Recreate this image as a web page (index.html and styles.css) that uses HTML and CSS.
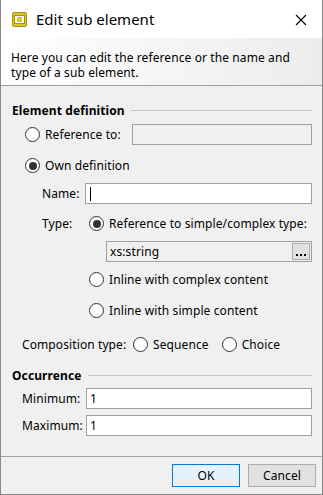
FILE: index.html
```html
<!DOCTYPE html>
<html lang="en">
<head>
    <meta charset="UTF-8">
    <title>Edit sub element</title>
    <link rel="stylesheet" href="styles.css">
</head>
<body>
    <div class="window">
        <div class="titlebar">
            <svg class="app-icon" width="15" height="15" viewBox="0 0 15 15">
                <rect x="0.5" y="0.5" width="14" height="14" rx="1.5" fill="#d9c62c" stroke="#a69300"/>
                <rect x="2.5" y="3.5" width="10" height="8" fill="#fff" stroke="#a69300"/>
                <rect x="5" y="5" width="5" height="5" fill="#dcc82e"/>
            </svg>
            <span class="title">Edit sub element</span>
            <svg class="close" width="12" height="12" viewBox="0 0 12 12">
                <path d="M1 1 L11 11 M11 1 L1 11" stroke="#000" stroke-width="1.1"/>
            </svg>
        </div>

        <div class="header">
            Here you can edit the reference or the name and type of a sub element.
        </div>

        <div class="content">
            <div class="section section-first">Element definition</div>

            <div class="row row-ref">
                <label class="radio-item"><span class="radio"></span>Reference to:</label>
                <div class="field field-disabled field-ref"></div>
            </div>

            <div class="row row-own">
                <label class="radio-item"><span class="radio checked"></span>Own definition</label>
            </div>

            <div class="row row-name">
                <span class="label label-inner">Name:</span>
                <div class="field field-name"><span class="caret"></span></div>
            </div>

            <div class="row row-type">
                <span class="label label-inner label-type">Type:</span>
                <label class="radio-item"><span class="radio checked"></span>Reference to simple/complex type:</label>
            </div>

            <div class="row row-combo">
                <div class="field field-disabled field-combo">
                    <span>xs:string</span>
                    <span class="dots-button"><i></i><i></i><i></i></span>
                </div>
            </div>

            <div class="row row-inline1 indent-type">
                <label class="radio-item"><span class="radio"></span>Inline with complex content</label>
            </div>

            <div class="row row-inline2 indent-type">
                <label class="radio-item"><span class="radio"></span>Inline with simple content</label>
            </div>

            <div class="row row-comp">
                <span class="label label-comp">Composition type:</span>
                <label class="radio-item"><span class="radio"></span>Sequence</label>
                <label class="radio-item radio-choice"><span class="radio"></span>Choice</label>
            </div>

            <div class="section section-occ">Occurrence</div>

            <div class="row row-min">
                <span class="label label-occ">Minimum:</span>
                <div class="field field-occ">1</div>
            </div>

            <div class="row row-max">
                <span class="label label-occ">Maximum:</span>
                <div class="field field-occ">1</div>
            </div>
        </div>

        <div class="footer">
            <button class="btn btn-default">OK</button>
            <button class="btn">Cancel</button>
        </div>
    </div>
</body>
</html>
```

FILE: styles.css
```css
* {
    box-sizing: border-box;
}

body {
    margin: 0;
    background-color: #fff;
    font-family: 'Noto Sans', 'Open Sans', sans-serif;
    font-size: 12px;
    letter-spacing: 0.1px;
    color: #000;
}

.window {
    width: 323px;
    height: 495px;
    border: 1px solid #888;
    border-top: none;
    background-color: #f0f0f0;
    display: flex;
    flex-direction: column;
}

.titlebar {
    height: 38px;
    background-color: #fff;
    display: flex;
    align-items: center;
    padding-left: 11px;
}

.app-icon {
    margin-top: 1px;
}

.title {
    font-size: 15px;
    letter-spacing: 0;
    margin-left: 9px;
    flex: 1;
}

.close {
    margin-right: 15px;
    margin-top: 2px;
}

.header {
    height: 48px;
    padding: 12px 20px 0 10px;
    line-height: 15px;
    background: linear-gradient(to right, #fff, #ececec);
    border-bottom: 1px solid #a0a0a0;
}

.content {
    flex: 1;
    padding: 0 10px 0 11px;
    border-bottom: 1px solid #a0a0a0;
}

.section {
    height: 16px;
    display: flex;
    align-items: center;
    font-weight: bold;
}

.section::after {
    content: "";
    flex: 1;
    border-top: 1px solid #c4c4c4;
    margin-left: 6px;
    margin-top: 1px;
}

.section-first {
    margin-top: 16px;
}

.row {
    height: 21px;
    display: flex;
    align-items: center;
}

.radio-item {
    display: flex;
    align-items: center;
}

.radio {
    width: 15px;
    height: 15px;
    border: 1px solid #333;
    border-radius: 50%;
    background-color: #fff;
    margin-right: 5px;
    display: flex;
    align-items: center;
    justify-content: center;
}

.radio.checked::after {
    content: "";
    width: 8px;
    height: 8px;
    border-radius: 50%;
    background-color: #333;
}

.field {
    height: 21px;
    border: 1px solid #a0a0a0;
    background-color: #fff;
    display: flex;
    align-items: center;
    padding-left: 3px;
}

.field-disabled {
    background-color: #f0f0f0;
}

.row-ref {
    margin-top: 6px;
    padding-left: 13px;
}

.field-ref {
    margin-left: auto;
    width: 180px;
}

.row-own {
    margin-top: 10px;
    padding-left: 13px;
}

.label-inner {
    width: 43px;
    margin-left: 30px;
}

.row-name {
    margin-top: 7px;
}

.field-name {
    width: 227px;
    margin-left: auto;
}

.caret {
    width: 1px;
    height: 14px;
    background-color: #000;
    margin-left: 1px;
}

.row-type {
    margin-top: 9px;
}

.label-type {
    width: 47px;
}

.row-combo {
    margin-top: 7px;
}

.field-combo {
    width: 206px;
    margin-left: auto;
    justify-content: space-between;
    padding-right: 1px;
}

.dots-button {
    width: 18px;
    height: 17px;
    border: 1px solid #adadad;
    background-color: #e1e1e1;
    display: flex;
    align-items: flex-end;
    justify-content: center;
    gap: 2px;
    padding-bottom: 3px;
}

.dots-button i {
    width: 2px;
    height: 2px;
    background-color: #000;
}

.indent-type {
    padding-left: 77px;
}

.row-inline1 {
    margin-top: 7px;
}

.row-inline2 {
    margin-top: 10px;
}

.row-comp {
    margin-top: 13px;
}

.label-comp {
    margin-left: 10px;
    width: 111px;
}

.radio-choice {
    margin-left: 13px;
}

.section-occ {
    margin-top: 12px;
}

.label-occ {
    margin-left: 10px;
    width: 64px;
}

.field-occ {
    flex: 1;
}

.row-min {
    margin-top: 5px;
}

.row-max {
    margin-top: 6px;
}

.footer {
    height: 37px;
    display: flex;
    justify-content: flex-end;
    align-items: flex-start;
    padding: 7px 6px 0 0;
    gap: 8px;
}

.btn {
    width: 68px;
    height: 23px;
    font-family: inherit;
    font-size: 12px;
    letter-spacing: 0.1px;
    color: #000;
    background-color: #e1e1e1;
    border: 1px solid #adadad;
    padding: 0;
}

.btn-default {
    background-color: #e5f1fb;
    border-color: #0078d7;
}
```
